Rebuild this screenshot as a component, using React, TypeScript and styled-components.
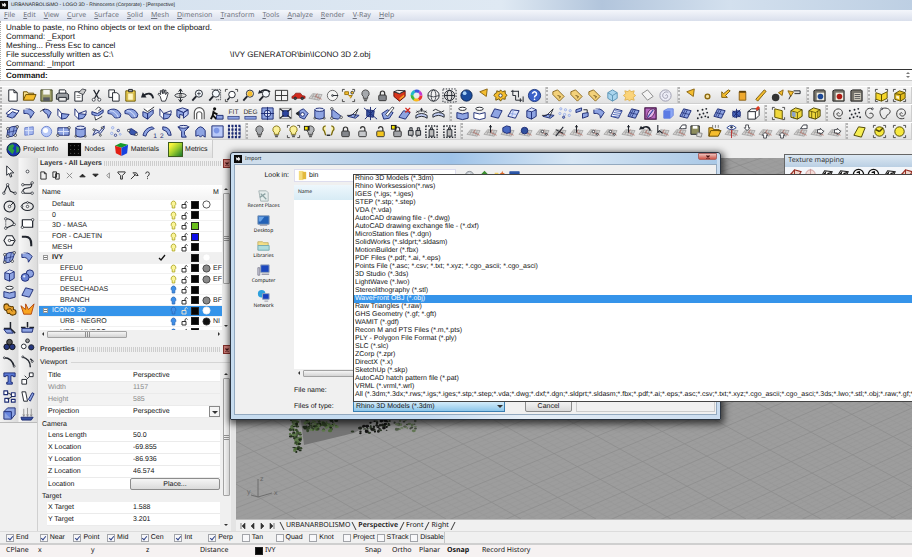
import React from "react";
import styled, { createGlobalStyle } from "styled-components";

const GlobalStyle = createGlobalStyle`
  * { box-sizing: border-box; }
  html, body { margin: 0; padding: 0; }
  body {
    font-family: "Liberation Sans", Arial, sans-serif;
    font-size: 7px;
    color: #111;
    background: #f0f0f0;
    text-rendering: geometricPrecision;
  }
  button, input, select { font: inherit; color: inherit; margin: 0; padding: 0; border: 0; background: none; text-rendering: inherit; }
`;

/* ---------- icon drawings, on a 16 x 16 grid ---------- */

const INK = "#20242c";
const NAVY = "#1d2c74";
const BLUE = "#8ea4e2";
const PALE = "#dfe6fb";
const GOLD = "#f5bd2e";

const s = (d: string, stroke = INK, w = 1, fill = "none") => (
  <path d={d} stroke={stroke} strokeWidth={w} fill={fill} strokeLinejoin="round" />
);
const b = (d: string, fill = BLUE) => s(d, NAVY, 1, fill);
const dot = (x: number, y: number, r = 1.3, fill = "#fff", stroke = INK) => (
  <circle cx={x} cy={y} r={r} fill={fill} stroke={stroke} strokeWidth={0.8} />
);
const bulb = (fill: string, stroke = "#444") => (
  <>
    <path d="M8 2a4 4 0 0 0-2.3 7.2V11h4.6V9.200A4 4 0 0 0 8 2z" fill={fill} stroke={stroke} />
    <path d="M6 12h4M6.500 13.500h3" stroke="#555" strokeWidth="1.300" />
  </>
);
const lock = (fill: string, open = false) => (
  <>
    <path d={open ? "M10.500 8V5a2.300 2.300 0 0 0-4.600 0" : "M5.700 8V5.500a2.300 2.300 0 0 1 4.600 0V8"} stroke="#333" strokeWidth="1.300" fill="none" />
    <rect x="4" y="7.500" width="8" height="6" rx="1" fill={fill} stroke="#333" />
  </>
);
const plane = (
  <>
    <path d="M1 11l4-5 10 1-3 6z" fill="#d4d2d0" stroke="#999" strokeWidth="0.700" />
    <path d="M3.500 8.500l10 1.500M6.500 6.200L4 11.500M9 6.500L7 12M12 6.800L10 12.500" stroke="#999" strokeWidth="0.700" />
    <path d="M8 9l6.500 3M8 9l2-3" stroke="#b3695f" strokeWidth="0.800" />
  </>
);
const lens = (
  <>
    <circle cx="9.500" cy="6" r="3.800" fill="#f4f8fc" stroke={INK} />
    <path d="M6.500 9L2.500 13.500" stroke={INK} strokeWidth="2" />
  </>
);
const tag = (
  <>
    <path d="M2 4l5-2 7 7-5 5-7-7z" fill="#f3d17a" stroke="#8a681e" />
    <path d="M7 8l3 1-1 2" stroke="#6b5118" fill="none" />
  </>
);
const corners = (
  <path d="M1.500 4V1.500H4M12 1.500h2.500V4M14.500 12v2.500H12M4 14.500H1.500V12" stroke="#333" fill="none" strokeWidth="0.900" />
);
const sheet = b("M2 11l4-8 8 2-4 8z");

const glyphs: Record<string, React.ReactNode> = {
  new: s("M4 2h5.500L13 5v9H4zM9.500 2v3H13", INK, 1, "#fff"),
  open: <>{s("M1.500 13V4h4l1 1.500h6V7", "#6a4d00", 1, "#f7df8a")}{s("M1.500 13l2.500-6h11l-2.500 6z", "#6a4d00", 1, GOLD)}</>,
  save: <>{s("M2 2h12v12H2z", "#3d411f", 1, "#a0a06b")}<path d="M4.500 2h7v5h-7z" fill="#f3f3ee" /><path d="M4.500 10h7v4h-7z" fill="#565a60" /></>,
  print: <>{s("M4.500 6V2h6l1 1v3", INK, 1, "#fff")}{s("M1.500 7l2-1.500h9l2 1.500v5h-13z", INK, 1, "#9b9ea3")}{s("M4 10h8v4H4z", INK, 1, "#eee")}</>,
  props: <>{s("M3 4h8v10H3z", INK, 1, "#fff")}{s("M7 5l4-4 4 1-3 5z", INK, 0.8, "#ccc")}{s("M5 8h4M5 10h4", "#888")}</>,
  cut: <>{s("M5 2l5 9M11 2L6 11", INK, 1.3)}{dot(5, 12.5, 1.6)}{dot(11, 12.5, 1.6)}</>,
  copy: <>{s("M3 2h6v8H3z", INK, 1, "#fff")}{s("M7 5h4.500L14 7v7H7z", INK, 1, "#fff")}</>,
  paste: <>{s("M3 3h10v11H3z", "#665400", 1, "#f3d552")}{s("M5 5.500h6V13H5z", "#b49831", 0.6, "#fff6c0")}{s("M6 1.500h4v2.500H6z", INK, 1, "#aaa")}</>,
  undo: <>{s("M14 11C13 5 8 5 4 8", INK, 2)}<path d="M1 10l2-5.500L7 10z" fill={INK} /></>,
  pan: s("M4.500 9L2 6.500 3 5.500l2 1.500-.5-4 1.300-.3L7 6V1.800h1.400V6l1-3.800 1.300.3L10.300 7l1.500-2.500 1.200.7-1.500 5.300L10 14H6z", INK, 0.9, "#fff"),
  rotate: <>{s("M8 1v14M8 1L6 4M8 1l2 3M6 12l2 3 2-3", INK)}<ellipse cx="8" cy="8" rx="6" ry="2.200" fill="none" stroke={INK} /><circle cx="8" cy="8" r="2" fill="#8b8b8b" /></>,
  zoom: <>{lens}{s("M9.500 4v4M7.500 6h4", INK, 0.8)}</>,
  zoomwin: <>{lens}<path d="M5 1.500h9.500v11H9" stroke={INK} fill="none" strokeDasharray="1 1" /></>,
  zoomext: <>{corners}<circle cx="8.500" cy="7" r="3.500" fill="#fff" stroke={INK} />{s("M6 10l-2.500 3", INK, 1.6)}</>,
  zoomsel: <>{lens}<circle cx="9.500" cy="6" r="2.800" fill={GOLD} /></>,
  zoomprev: <>{lens}{s("M3 5c2-3 7-4 11-1", INK, 1.6)}<path d="M1 6l1.500-4L6 5z" fill={INK} /></>,
  four: <>{s("M1.500 2.500h13v11h-13z", "#333", 1, "#f4f4f4")}{s("M8 2.500v11M1.500 8h13", "#333", 1)}</>,
  car: <><path d="M1 9l2-1 2-2.500h5L12 8l3 .8V11H1z" fill="#d42a1e" stroke="#7c120c" strokeWidth="0.700" />{dot(4.5, 11, 1.4, "#444")}{dot(12, 11, 1.4, "#444")}</>,
  plane,
  circle: <><circle cx="8" cy="8" r="5.500" fill="#f5f5f5" stroke="#666" />{dot(8, 8, 1)}{s("M8 8h6", INK)}</>,
  select: <>{corners}{s("M4 4h4v3H4zM8 8h4l-2 3", "#9b7410", 1, GOLD)}{dot(12, 5, 1.5, GOLD)}</>,
  bulbgray: bulb("#a6a9ad"),
  bulbyellow: bulb("#fbf19a", "#857410"),
  bulbsel: <>{corners}{bulb("#fbf19a", "#857410")}</>,
  bulbswap: <>{bulb("#b4b6b9")}<path d="M1 2h6v5H1z" fill="#1c1c1c" /><path d="M2 3h3v3H2z" fill="#f5e400" /></>,
  bulbs: <>{s("M5 2a3 3 0 0 0-1.500 5.500L5 12M11 2a3 3 0 0 1 1.500 5.500L11 12", "#7a6a10", 1.4, "#fbf2a0")}{s("M6 12h4", INK, 1.5)}</>,
  lock: lock("#84878c"),
  unlock: lock("#c6c8cb", true),
  lockyellow: lock("#f3c51e", true),
  lockswap: <>{lock("#a2a4a8")}<path d="M1 1h6v5H1z" fill="#1c1c1c" /><path d="M2 2h3v3H2z" fill="#f5e400" /></>,
  locks: <>{s("M1.500 7h5v5h-5zM9.500 7h5v5h-5zM3 7V4h2.500v3M11 7V4h2.500v3M4 12l2 2M12 12l-2 2", INK, 1, "#bbb")}</>,
  lockdots: <><path d="M1.500 2h13M1.500 14h13M2 2v12M14 2v12" stroke={INK} strokeWidth="1.600" strokeDasharray="1.500 1.500" />{s("M5.500 6h5v7h-5zM7 6V4h2v2", INK, 1, "#bbb")}</>,
  shade: <>{s("M2 4l6 2 6-3v6l-6 5-6-5z", "#6b1008", 1, "#d8361c")}{s("M2 4l4-1.500L14 3 8 6z", INK, 1, "#f6f0ea")}<path d="M8 11l5-4v2l-5 4z" fill="#f4a62a" /></>,
  wheel: <>{["#e33", "#f8b81c", "#3cba3c", "#23b9c9", "#3a56e0", "#c63ad0"].map((c, i) => (
    <circle key={c} cx="8" cy="8" r="4.800" fill="none" stroke={c} strokeWidth="3" strokeDasharray="5.100 40" strokeDashoffset={-i * 5.03} />
  ))}</>,
  globe: <><circle cx="8" cy="8" r="6" fill="#f1f1f1" stroke={INK} /><ellipse cx="8" cy="8" rx="2.500" ry="6" fill="none" stroke={INK} strokeWidth="0.800" />{s("M2 8q6 3 12 0", INK, 0.8)}</>,
  globesel: <><circle cx="8" cy="8" r="5.500" fill="#ddd" stroke={INK} /><ellipse cx="8" cy="8" rx="2.500" ry="5.500" fill="none" stroke={INK} />{s("M2.500 8h11", INK)}<rect x="1" y="1" width="14" height="14" fill="none" stroke={INK} strokeDasharray="1.500 1.500" /></>,
  ball: <><circle cx="8" cy="8" r="6" fill="#1b4d9e" stroke="#0c2450" /><circle cx="6" cy="5.500" r="2" fill="#a9d2f7" /></>,
  pointer: s("M4 4l8-3-1 8z", "#8a6410", 1, GOLD),
  gear: <>{s("M2 6l2-1V3l3 1 1-2 2 2 3-1v2.500L15 8l-2 1.500V12l-3-.5L8 14l-1.500-2.500L3 13v-3L1 8z", "#6f5408", 1, GOLD)}{dot(8, 8, 1.8)}</>,
  dims: s("M3 2v6M1 3.500h8M9 3v7M3 8h3v5h7M11 11v4M14 9v6", INK, 1),
  help: <><circle cx="8" cy="8" r="6.500" fill="#3c62c9" stroke="#1b3680" /><path d="M5.800 6.200a2.200 2.200 0 1 1 3.300 2Q8 9 8 10" stroke="#fff" strokeWidth="1.600" fill="none" /><circle cx="8" cy="12" r="0.900" fill="#fff" /></>,
  tag,
  cube: <>{s("M3 5l5-3 5 3v6l-5 3-5-3z", "#5b93b4", 1, "#a9d5ee")}{s("M3 5l5 3 5-3M8 8v6", "#5b93b4", 1)}</>,
  puff: s("M8 2l1.500 2L13 3l-1 3 2.500 2L12 10l1 3-3.500-1L8 14l-1.500-2L3 13l1-3-2.500-2L4 6 3 3l3.500 1z", "#e0b352", 1, "#fbd47a"),
  rhomb: s("M2 6l6-4 6 7-6 4z", "#8a8a8a", 1, "#f4f4f4"),
  swirl: <><circle cx="8" cy="8" r="6" fill="#ececf6" stroke="#9a9aac" />{s("M8 8c1-2 3 0 2 2s-5 1-5-2 4-5 6-3", "#9a9aac")}</>,
  ring: <><circle cx="8" cy="9" r="2.500" fill="#f6e3a3" stroke="#8d6a10" strokeWidth="1.500" /></>,
  downleft: s("M13 3L8 8l2 2H4V4l2 2 5-4z", "#7a5c0d", 1, GOLD),
  cyl: <>{s("M4.500 4h7v9h-7z", "#8a5e10", 1, "#efa92d")}{s("M4.500 4h7", "#5c3e08", 2)}</>,
  bar: s("M3 12L12 2l2 1.500L5 14z", "#7a5c0d", 1, GOLD),
  bomb: <><circle cx="6" cy="10" r="4" fill="#333" />{s("M9 5l5-3-1 6z", "#8a6410", 1, GOLD)}</>,
  spot: <>{s("M1 3l6 1-3 5z", "#8a6410", 1, GOLD)}{s("M7 3h7v3H8", INK, 1, "#ddd")}{s("M2 12l2-4", INK)}</>,
  render: <>{s("M2 3l2-1h9l1 1v11H2z", "#222", 1, "#76736a")}<path d="M5 5h8v8H5z" fill="#f0ede2" /><circle cx="9" cy="9" r="3" fill="#1c4896" /></>,
  renderred: <>{s("M2 3l2-1h9l1 1v11H2z", "#222", 1, "#76736a")}<path d="M5 5h8v8H5z" fill="#f0ede2" /><circle cx="9" cy="9" r="3" fill="#ae1b14" /></>,
  list: <>{s("M2 3l2-1h9l1 1v11H2z", "#222", 1, "#76736a")}{s("M5 5h8v8H5z", "#444", 0.5, "#e7e2d2")}{s("M6 7h6M6 9h6M6 11h6", INK, 0.8)}</>,
  boxopen: <>{corners}{s("M2 5l6 2v7l-6-2zM8 7l6-3v7l-6 3z", "#5f5100", 1, "#f5d62b")}</>,
  boxgold: <>{corners}{s("M3 6l5-3 6 2v6l-5 3-6-2z", "#5f5100", 1, "#e4bb1f")}{s("M3 6l6 1 5-2M9 7v7", "#5f5100")}<path d="M4.500 8l3 .7v3l-3-.7z" fill="#fdf5c8" /></>,
  sheet,
  sheetlight: <>{b("M2 11l4-7 8 1-4 8z", PALE)}{s("M4 8l8 1M8 4l-2 8", BLUE)}</>,
  surf: <>{s("M1 8l6-5 8 2-5 7z", NAVY, 1, "#fff")}{b("M2 11l6-5 5 2-5 5z")}</>,
  curl: <>{b("M2 4q7-3 11 3l-4 6Q9 7 2 8z")}{s("M2 4l5-1", "#fff", 0.8)}</>,
  curlhalf: <>{b("M4 4q6-2 9 3l-3 6Q10 8 6 7z")}{s("M1 6l5-3", INK, 0.8)}</>,
  fold: <>{b("M2 3l4 5v6l-4-4z", "#fff")}{b("M6 8l8 1-3 4-5 1z")}</>,
  fold2: <>{b("M2 3l4 5 8-3v3l-8 6-4-4z", "#fff")}{b("M6 8l8 1-3 4-5 1z")}</>,
  sweep: <>{b("M2 6l6 2 6-4v3l-6 4-6-2z")}{s("M6 4l3-3 3 2-3 2M5 11l1 4 7-4", INK, 0.9, "#fff")}</>,
  leaf: <>{b("M1 5q7-4 12 1 3 3 1 6-6 2-7-1T1 8z")}{s("M3 5q6 0 9 7", "#dfe6fb")}</>,
  block: <>{b("M2 6l5 2v6l-5-3zM7 8l6-4v4l-6 6z")}{s("M3 3l4 3 7-5", INK, 1, "#fff")}</>,
  boxes: <>{b("M2 4l6-2 6 2-5 3zM9 7l5-3v5l-5 4z", "#b9c6f3")}{b("M2 4l7 3v3L5 9v4L2 11z")}</>,
  arch: <>{s("M2.500 14V7a5 5 0 0 1 10.500 0v7M5 14V8a3 3 0 0 1 5.500 0v6", "#555", 1.2, "#fff")}</>,
  worker: <><circle cx="6" cy="3" r="1.700" fill="#111" />{s("M5 5L4 10l-2 4M5 7l4 2M4 10l4 4", "#111", 2)}{b("M8 10h7v4H8z")}</>,
  fit: <><rect x="2" y="11" width="12" height="3" fill={BLUE} stroke={NAVY} strokeWidth="0.700" /><text x="8" y="8" fontSize="7" textAnchor="middle" fill="#333">FIT</text></>,
  deg: <><rect x="2" y="11" width="12" height="3" fill={BLUE} stroke={NAVY} strokeWidth="0.700" /><text x="8" y="8" fontSize="7" textAnchor="middle" fill="#333">DEG</text></>,
  target: <>{b("M2 2h12v12H2z")}<circle cx="8" cy="8" r="3.500" fill="#dfe6fb" stroke={NAVY} />{s("M8 1v14M1 8h14", NAVY)}</>,
  shrink: <>{s("M1.500 2.500h13v11h-13z", "#777", 0.8, "#e6e6e6")}{b("M5 5h6v6H5z", "#2e469e")}{s("M2 3l4 3M14 3l-4 3M2 13l4-3M14 13l-4-3", INK, 1.2)}</>,
  tangent: <>{b("M5 5l4-2 5 5-4 6-5-2z")}<circle cx="8" cy="9" r="2" fill="#fff" stroke={NAVY} />{s("M1 8l3-2v4z", INK, 1, INK)}</>,
  bluecyl: <>{b("M3 4h10v9q-5 2-10 0z")}<ellipse cx="8" cy="4" rx="5" ry="1.800" fill={PALE} stroke={NAVY} />{dot(3, 13, 1)}{dot(13, 13, 1)}</>,
  tri: <>{b("M3 3l10 8-3 3-7-1z")}{dot(3, 3)}{dot(3, 13)}{dot(13, 12)}</>,
  bird: <>{b("M2 11l5-2 7 1-4 3z")}{s("M1 10h5l7-7-4 9", INK, 0.9)}</>,
  burst: <>{b("M4 4l8 1-1 7-7-1z", "#38539f")}{s("M1 2l14 12M14 2L2 14M8 1v14", NAVY, 1)}</>,
  pencil: <>{b("M2 8l6-4 6 3-4 6-6 1z")}{s("M6 9l7-8 2 1-7 9z", INK, 0.8, "#fff")}</>,
  delsrf: <>{b("M2 12l5-7 7 2-5 7z")}{s("M9 2l5 5M14 2L9 7", "#d3271f", 1.4)}</>,
  comb: <>{s("M2 13q6-4 12 0v-3q-6-4-12 0z", INK, 1, "#c3cff5")}{s("M2 7q6-4 12 0M3 5l2 2M8 2v4M6.500 3.500h3M13 5l-2 2", INK, 0.9)}</>,
  comb2: <>{s("M2 12q6-4 12 0v-3q-6-4-12 0z", INK, 1, "#c3cff5")}{s("M2 5q3-3 6 0t6 0", INK)}</>,
  tube: <><ellipse cx="8" cy="3" rx="4" ry="1.700" fill="#fff" stroke={INK} />{b("M2 7q6 3 12 0v6q-6 3-12 0z")}</>,
  tubelight: <><ellipse cx="8" cy="3" rx="4" ry="1.700" fill="#fff" stroke={INK} />{b("M2 7q6 3 12 0v6q-6 3-12 0z", "#fff")}</>,
  bluecube: <>{b("M3 5l5-3 5 2v7l-5 3-5-2z")}{b("M3 5l5 1 5-2M8 6v8", "none")}<path d="M4 4.500L8 2.500l4 1.500-4 1.500z" fill={PALE} /></>,
  pts: <>{[3, 8, 13].map((x, i) => <React.Fragment key={x}>{dot(x, 3 + i, 1.2, PALE, BLUE)}{dot(x - 1, 8 + i, 1.2, PALE, BLUE)}</React.Fragment>)}{dot(6, 12, 1.2, BLUE, NAVY)}</>,
  two: <>{b("M1 4l6-2v3L1 7zM8 8l6-1v4l-6 2z")}{s("M9 4h4v3", INK)}</>,
  stripe: <>{b("M2 11l4-8 8 2-4 8z", "#fff")}{s("M4 9l8 1M5 7l8 1M6 5l8 1M3 11l8 1", "#4a63b8", 1)}</>,
  gridsrf: <>{b("M2 11l4-8 8 2-4 8z")}{s("M4 7l8 2M10 4l-4 8M8 3.500L4 11", NAVY, 0.8)}</>,
  purple: <>{s("M2 2h12v12H2z", "#451548", 1.3, "#b667be")}{s("M4 12q1-9 7-9l2 1q-1 8-7 9z", "#451548", 0.8, "#e2b5e6")}{s("M5 12L11 4", "#2a43a0", 1.2)}</>,
  softcube: <>{s("M3 5l4-2h6v7l-3 3H3z", "#6a84dc", 1, "#8ea9f5")}<path d="M3 5h7v8H3z" fill="#5b7be4" /></>,
  spray: <>{[[3, 5], [5, 9], [8, 4], [9, 8], [12, 3], [13, 7], [7, 12], [11, 11], [3, 13], [14, 12]].map(([x, y]) => <circle key={x * 20 + y} cx={x} cy={y} r="1" fill={INK} />)}</>,
  wirebox: <>{s("M2 6l4-3h8v7l-4 4H2zM2 6h8v8M10 6l4-3", INK, 1, "#fff")}{s("M11 4l3-3", "#db3b23", 3)}</>,
  star: <>{b("M4 6l6-1 2 1v5l-6 1-2-1z", "#4763b9")}{s("M8 3v10M4 5l8 7M12 4l-8 8", NAVY)}</>,
  yplane: <>{corners}{s("M4 3l8 2v9l-8-2z", "#5d5000", 1, "#f0d83c")}</>,
  ycube: <>{s("M2 5l5-3 7 2v7l-5 3-7-2z", "#4a4200", 1, "#f0d83c")}{s("M2 5l7 2 5-3M9 7v7M5 6v7", "#4a4200", 0.8)}<path d="M3 6l4 1v5l-4-1z" fill="#8ba3ce" /></>,
  ycube2: <>{s("M2 5l5-3 7 2v7l-5 3-7-2z", "#4a4200", 1, "#f0d83c")}{s("M2 5l7 2 5-3M9 7v7M5 6v7M11.500 5v7", "#4a4200", 0.8)}</>,
  spiral: s("M9 8c-1-2-4 0-2 2s6 0 5-4-8-4-9 1 3 8 8 6", "#333", 1),
  crv: <>{s("M11 3c-5-2-8 2-7 6s7 6 8 1c0-2-2-3-4-2", "#333", 1)}{dot(11, 3, 1)}</>,
  blob: <>{s("M4 3c4-2 9 0 9 3S9 9 9 11s-3 4-5 1S1 5 4 3z", "#333", 1)}{dot(4, 3, 1)}</>,
  patch: <>{b("M3 5l4-2 7-1-3 9-3 2-6 1z")}{s("M5 4l-1 9M10 3L8 12M3 9l9-2", NAVY, 0.7)}{dot(3, 5)}{dot(13, 3)}{dot(11, 12)}{dot(3, 13)}</>,
  patchlight: <>{s("M3 4l9-1v8l-9 1z", "#6c82cc", 1, "#a6b8ef")}{s("M3 7h9M7 3v9", "#dfe6fb")}</>,
  ballight: <><circle cx="8" cy="8" r="5.500" fill="#b8c9f7" stroke="#6f86cf" /><circle cx="7" cy="7" r="2.700" fill="#fff" /></>,
  rect: <>{b("M2 4h12v8H2z")}{s("M2 8h12M8 4v8", PALE)}{dot(2, 12)}{dot(14, 4)}</>,
  bags: <>{b("M2 12l3-6 4 2 5-6v3l-4 5-3-1z", PALE)}{dot(3, 6, 1)}{dot(12, 4, 1)}{dot(10, 12, 1)}</>,
  dots3: <>{dot(5, 4, 1.3, PALE, BLUE)}{dot(11, 7, 1.3, PALE, NAVY)}{dot(4, 10, 1.3, PALE, BLUE)}{dot(8, 12, 1.3, PALE, NAVY)}{dot(13, 11, 1, PALE, BLUE)}</>,
  bone: <>{b("M3 6l4-1 6 4-2 3-5-1z", "#3a57ae")}{dot(4, 7)}{dot(12, 11)}</>,
  arc1: <>{b("M1 12Q3 4 11 3l2 2Q6 6 4 13z")}<text x="12" y="15" fontSize="7" fill={NAVY}>1</text></>,
  arc2: <>{b("M4 3q8 0 9 9h-3Q9 7 4 6z")}<text x="1" y="15" fontSize="7" fill={NAVY}>2</text></>,
  funnel: <>{b("M2 3h12L9 8v3l2 3H6V8z")}<ellipse cx="8" cy="3" rx="5" ry="1.500" fill={PALE} stroke={NAVY} /></>,
  cloth: b("M3 13V7q5-8 10 0v7l-3-2-2 2-2-2z"),
  photo: <>{b("M2 2h12v12H2z", "#b9c9f8")}<circle cx="7" cy="7" r="3" fill="#7d97e6" /></>,
  matrix: <>{[2, 6, 10, 14].map((y) => <path key={y} d={`M1 ${y}h14`} stroke={NAVY} strokeWidth="2.200" strokeDasharray="2.200 1.500" />)}{s("M2 2v12M6 2v12M10 2v12M14 2v12", NAVY, 0.7)}</>,
  planeup: <>{plane}{s("M8 9V1M6.500 3h3", INK, 1.1)}</>,
  planebox: <>{plane}{b("M3 4l4-2 4 1v6l-4 1-4-2z", "#4969c2")}</>,
  planeball: <>{plane}<circle cx="7" cy="7" r="3.500" fill="#30509f" stroke={NAVY} /></>,
  planept: <>{plane}{dot(8, 8, 1.3)}{dot(12, 11, 1)}</>,
  planex: <>{plane}{s("M4 13L12 3M4 6l8 4", INK, 1.1)}</>,
  planeundo: <>{plane}{s("M13 7C12 2 7 2 4 5", INK, 1.8)}<path d="M1 6l2-4 4 3z" fill={INK} /></>,
  planecur: <>{plane}{s("M3 1v8l2-2 3 3", INK, 1.2, "#fff")}</>,
  planedoc: <>{plane}{s("M8 5l3-4h4v4h-4z", INK, 0.9, "#fff")}</>,
  planesave: <><path d="M2 2h9v9H2z" fill="#8d8d5e" stroke={INK} /><path d="M4 2h5v3H4z" fill="#fff" />{s("M9 9l5 1-1 4-5-1z", "#888", 1, "#ddd")}</>,
  planeopen: <>{s("M2 13V4h4l1 2h6v2M2 13l2-6h11l-3 6z", "#6a4d00", 1, GOLD)}{s("M6 4V1M9 4V1M12 4V1", "#777")}</>,
  planeeye: <>{plane}{s("M3 4q5-5 10 0-5 4-10 0z", "#26418f", 1, "#fff")}{dot(8, 3.5, 1, "#26418f")}{s("M8 6v9", "#b33")}</>,
  planearr: <>{plane}{s("M5 1h3v3h1.500L6.500 7 3.500 4H5z", INK, 0.8, "#fff")}</>,
  planearr2: <>{plane}{s("M6 15h3v-3h1.500l-3-3-3 3H6z", INK, 0.8, "#fff")}</>,
  planeright: <>{plane}{s("M8 6h3V4.500L14.500 8 11 11V9.500H8z", INK, 0.8, "#fff")}</>,
  yrhomb: s("M2 12l5-9 7 1-4 10z", "#4a4200", 1, "#f6ee52"),
  yball: <>{corners}<circle cx="8" cy="8" r="5" fill="#f6e83e" stroke="#4a4200" /></>,
  yballcut: <>{corners}<circle cx="8" cy="8" r="5" fill="#f6e83e" stroke="#4a4200" />{s("M8 8l4-4M8 8L4 6", "#4a4200", 1.5)}</>,
  arrow: s("M5 2v10l2.500-2 1.500 4 1.500-.7L9 9.500h3.500z", INK, 1, "#fff"),
  point: dot(8, 8, 1.5),
  polyline: <>{s("M2 13L6 4l3 7 5 2", INK, 1.1)}{dot(6, 4)}{dot(2, 13)}{dot(14, 13)}</>,
  curve: <>{s("M3 4h8M11 3q3 1 0 4L5 8q-4 3 0 5h8", INK, 1.1)}{dot(3, 4)}{dot(13, 2)}{dot(3, 12)}{dot(13, 13)}</>,
  circ2: <><circle cx="8" cy="8" r="5.800" fill="none" stroke={INK} strokeWidth="1.200" />{dot(8, 8)}{s("M9 7l4-4", INK)}</>,
  ellipse: <><ellipse cx="8" cy="8" rx="6.200" ry="4.300" fill="none" stroke={INK} strokeWidth="1.200" />{dot(8, 8)}{dot(8, 3.7, 1)}{dot(2, 8, 1)}</>,
  arc: <>{s("M4 13l9-4M4 3q7 0 9 6", INK, 1.1)}<path d="M4 3v10" stroke={INK} strokeDasharray="1 1" />{dot(4, 3)}{dot(4, 13)}{dot(13, 9)}</>,
  rectangle: <>{s("M2.500 4h11v8h-11z", INK, 1.3, "#fff")}{dot(2.5, 12)}{dot(13.5, 4)}</>,
  polygon: <>{s("M5 3h6l3 5-3 5H5L2 8z", INK, 1.1, "#f6f6f6")}{dot(8, 8)}{s("M9 8h4", INK)}</>,
  fillet: s("M2 4h4q6 0 6 8v2", INK, 2.2),
  boolean: <><circle cx="10.500" cy="6" r="4" fill={BLUE} stroke={NAVY} /><circle cx="5.500" cy="10" r="4.200" fill="#6982d3" stroke={NAVY} /><circle cx="4.500" cy="9" r="1.200" fill={PALE} /></>,
  puzzle: <>{s("M2 5q0-3 3-3 2 0 2 2l3 1q3-1 2 3 3 0 3 3t-4 3q-2 0-3-2-3 1-3-3-3 0-3-4z", "#5a3900", 1.1, "#eaa32d")}{s("M5 8l4-1 2 3", "#5a3900", 1)}</>,
  explode: s("M1 4l5 4 0-6 3 6 6-6-3 11H4z", "#b3480e", 1, "#f8a522"),
  trim: <>{s("M2 9h7M9 2v7l5 5", INK, 1.6)}{b("M2 10h7l3 4H5z")}</>,
  split: <>{s("M1 8h5M10 8h5M8 2v6", INK, 1.6)}{b("M2 9h12l-1 4H2z")}</>,
  group: <><circle cx="8" cy="5.500" r="3" fill="#555" stroke="#111" /><circle cx="5" cy="10.500" r="3" fill="#26377e" stroke="#111" /><circle cx="11" cy="10.500" r="3" fill="#26377e" stroke="#111" /></>,
  ungroup: <><circle cx="8" cy="4" r="2" fill="#999" stroke={INK} /><circle cx="4" cy="10" r="2.500" fill="#fff" stroke={INK} /><circle cx="12" cy="11" r="2.800" fill="#26377e" stroke={INK} /></>,
  bend: <>{s("M2 4q9 0 11 10", INK, 1.6)}{dot(2.5, 4, 1)}{dot(13, 13, 1)}</>,
  bend2: <>{s("M2 3q9 2 9 11M11 5l3 3", INK, 1.5)}{dot(3, 3, 1)}{dot(13, 8, 1)}</>,
  text: b("M2 2h12v4h-2V5H9.500v7H11v2H5v-2h1.500V5H4v1H2z", "#5a79d6"),
  move: <>{s("M2 9h5v5H2zM10 2h4v4h-4z", INK, 1, "#fff")}{s("M7 9l3-3M5 5l2 2", INK, 1)}</>,
  array: <>{s("M2 2h4v4H2zM10 4h4v4h-4zM3 10h4v4H3zM10 11h4v3h-4z", NAVY, 1.2, "#fff")}{s("M6 4l4 2M6 11l5-3", INK)}</>,
  mirror: <>{s("M2 3h4l2 10H4z", INK, 1, "#fff")}{b("M9 11l4-7 2 1-4 8z")}</>,
  solid: <>{b("M2 6l4-4h8v7l-4 5H2z")}{b("M2 6h8v8", "#6583dd")}</>,
  ground: <>{s("M4 3v8M8 2v9M12 3v8M3 9l1 2 1-2M7 9l1 2 1-2M11 9l1 2 1-2", "#888", 0.9)}{b("M1 12h13l-2 3H2z", "#35519e")}</>,
  earth: <><circle cx="8" cy="8" r="7" fill="#1734b5" stroke="#102040" /><path d="M3 4l4-2 2 2-2 3 2 2-2 4-3-3-2-2zM11 4l3 2v4l-3 2z" fill="#2c9d40" /></>,
  nodes: <><rect x="1" y="1" width="14" height="14" fill="#080808" />{[4, 8, 12].map((y) => [4, 8, 12].map((x) => <circle key={`${x}-${y}`} cx={x} cy={y} r="0.500" fill="#999" />))}</>,
  rgb: <><path d="M1 4l6-3 8 2-7 3z" fill="#169a2a" /><path d="M1 4l7 2v9l-6-3z" fill="#e22015" /><path d="M8 6l7-3-1 9-6 3z" fill="#1742e0" /></>,
  tex: <><path d="M3 9l3-5 8 1-3 7-7 1z" fill="#fff" stroke="#222" strokeWidth="1.200" /><path d="M3 9l4-1 1-4z" fill="#111" /><path d="M9 7l4-1" stroke="#111" strokeWidth="1.500" /></>,
  texred: <><path d="M2 10l6-7 7 2-4 7z" fill="#f0d5cb" stroke="#94281d" strokeWidth="1.200" />{s("M4 7l8 3M8 3v8", "#94281d")}</>,
  texpale: <><circle cx="8" cy="8" r="5" fill="#f3dcd7" stroke="#c99" />{s("M8 2v12", "#c99")}</>,
  texball: <><circle cx="8" cy="8" r="5.500" fill="#fff" stroke="#111" strokeWidth="1.400" />{s("M6 6l3-1v5M4 11h8", "#111", 1.3)}</>,
};

const Svg = styled.svg<{ $size: number }>`
  display: block;
  flex: none;
  width: ${(p) => p.$size}px;
  height: ${(p) => p.$size}px;
`;

const Icon = ({ name, size = 15 }: { name: string; size?: number }) => (
  <Svg $size={size} viewBox="0 0 16 16" fill="none" aria-hidden="true">
    {glyphs[name]}
  </Svg>
);

/* ---------- frame ---------- */

const Frame = styled.div`
  position: relative;
  min-height: 100vh;
  display: flex;
  flex-direction: column;
  overflow: hidden;
  background: #f0f0f0;
`;

const TitleBar = styled.header`
  display: flex;
  align-items: center;
  gap: 3px;
  height: 10px;
  font-size: 5px;
  color: #222;
  background: linear-gradient(90deg, #d3e0ee, #dfe9f3 55%, #b2c5dc 66%, #d3e0ee 80%, #bdcfe3);
`;

const AppBadge = styled.span`
  display: grid;
  place-items: center;
  width: 8px;
  height: 8px;
  background: #0a0a0a;
`;

const Rhino = () => (
  <AppBadge>
    <Svg $size={6} viewBox="0 0 8 8" aria-hidden="true">
      <path d="M1 1l2 2 2-2 2 3-2 3-1-2-2 1z" fill="#eee" />
    </Svg>
  </AppBadge>
);

const MenuBar = styled.nav`
  display: flex;
  align-items: center;
  gap: 8px;
  height: 11px;
  padding-left: 4px;
  font: 7px/10px "Noto Sans", sans-serif;
  color: #6f7480;
  background: linear-gradient(#f4f6fb, #d9dfec);
`;

const MenuItem = styled.button`
  white-space: nowrap;
  &::first-letter { text-decoration: underline; }
`;

const CommandArea = styled.section`
  height: 60px;
  padding-left: 5px;
  font-size: 8px;
  line-height: 9px;
  background: #fff;
  border-left: 1px dotted #aaa;
  border-bottom: 1px solid #c9c9c9;
`;

const History = styled.div`
  display: flex;
  flex-direction: column;
  height: 49px;
  padding-top: 2px;
  border-bottom: 1px solid #333;
`;

const HistoryLine = styled.div`
  display: flex;
  white-space: pre;
`;

const PathStart = styled.span`
  width: 224px;
`;

const Prompt = styled.label`
  display: flex;
  align-items: center;
  height: 10px;
  font-weight: bold;
`;

const PromptInput = styled.input`
  flex: 1;
  outline: none;
`;

/* ---------- toolbars ---------- */

const ToolbarStack = styled.section`
  padding-top: 5px;
  background: #efefef;
`;

const ToolbarRow = styled.div`
  display: flex;
  height: 18px;
  border-top: 1px solid #fff;
  border-bottom: 1px solid #cfcfcf;
  background: linear-gradient(#f6f6f6, #e1e1e1);
`;

const ToolGroup = styled.div<{ $span: number }>`
  display: flex;
  flex: ${(p) => p.$span} 1 0;
  min-width: 0;
  padding: 0 2px;
  border-left: 2px dotted #b4b4b4;
  border-right: 1px solid #cdcdcd;
`;

const ToolButton = styled.button`
  display: flex;
  flex: 1 1 0;
  min-width: 0;
  align-items: center;
  justify-content: center;
`;

type Group = [number, string];

const toolbarRows: Group[][] = [
  [
    [560, "new open save print props cut copy paste undo pan rotate zoom zoomwin zoomext zoomsel zoomprev four car plane circle select bulbgray lock shade wheel globe globesel ball pointer gear dims help"],
    [130, "tag tag tag cube puff rhomb swirl"],
    [127, "pointer ring downleft cyl bar bomb spot"],
    [57, "render renderred list"],
    [38, "boxopen boxgold"],
  ],
  [
    [457, "surf curl curlhalf fold fold2 sweep leaf leaf block fold2 boxes arch worker fit deg target shrink tangent bluecyl tri bird burst pencil delsrf comb comb2"],
    [318, "tube tubelight sheet sheetlight bluecube bird pts two curl stripe gridsrf purple softcube gridsrf spray gridsrf star wirebox"],
    [56, "yplane ycube ycube2"],
    [81, "spiral spray crv blob spiral"],
  ],
  [
    [247, "patch patchlight ballight rect bluecyl bags dots3 bone arc1 arc2 funnel cloth photo matrix"],
    [214, "bulbgray bulbyellow bulbsel bulbswap bulbs lock unlock lockyellow lockswap locks lockdots lockdots"],
    [390, "plane planeup planebox planeball planept planex planeup planept planept planeup planeundo planecur planedoc planesave planeopen planeeye planearr planearr2 planearr2 planedoc planeright planeright"],
    [61, "yrhomb yballcut yball"],
  ],
];

const PluginRow = styled.div`
  display: flex;
  height: 18px;
`;

const PluginBar = styled.div`
  display: flex;
  align-items: center;
  gap: 9px;
  padding: 0 4px;
  border-left: 2px dotted #b4b4b4;
  border-right: 1px solid #cdcdcd;
  background: linear-gradient(#f6f6f6, #e1e1e1);
`;

const PluginButton = styled.button`
  display: flex;
  align-items: center;
  gap: 2px;
  font-size: 7px;
`;

const Metric = styled.span`
  width: 15px;
  height: 15px;
  border: 1px solid #3c5c1e;
  background: linear-gradient(135deg, #f7f43c 15%, #9fce2e 50%, #1a7a2b);
`;

/* ---------- work area ---------- */

const WorkArea = styled.main`
  display: grid;
  grid-template-columns: 37px 194px minmax(0, 1fr);
  flex: 1;
  min-height: 0;
`;

const Palette = styled.aside`
  display: grid;
  grid-template-columns: 1fr 1fr;
  grid-auto-rows: 1fr;
  align-self: start;
  height: 265px;
  padding-top: 5px;
  background: linear-gradient(90deg, #f2f2f2, #dcdcdc 48%, #f6f6f6 52%, #dcdcdc);
  border-bottom: 1px solid #bbb;
`;

const paletteTools =
  "arrow point polyline curve circ2 ellipse arc rectangle polygon fillet patch curl bluecube boolean tube sheet puzzle explode trim split group ungroup bend bend2 text move array mirror solid ground";

const Panels = styled.div`
  display: flex;
  flex-direction: column;
  min-width: 0;
  border-left: 1px solid #d0d0d0;
`;

const PanelTitle = styled.h2`
  display: flex;
  align-items: center;
  gap: 2px;
  height: 11px;
  margin: 0;
  padding-left: 2px;
  font-size: 7px;
  font-weight: 600;
  color: #333;
`;

const Grip = styled.span`
  flex: 1;
  height: 5px;
  background: repeating-linear-gradient(90deg, #cdcdcd 0 1px, transparent 1px 2px);
`;

const RedClose = styled.button`
  display: grid;
  place-items: center;
  width: 8px;
  height: 9px;
  border: 1px solid #86302b;
  background: #cf7d77;
`;

const Cross = () => (
  <Svg $size={6} viewBox="0 0 6 6" aria-hidden="true">
    <path d="M1.500 1.500l3 3m0-3l-3 3" stroke="#411" strokeWidth="1.200" />
  </Svg>
);

const LayerTools = styled.div`
  display: flex;
  gap: 2px;
  height: 16px;
`;

const LayerToolButton = styled.button`
  display: grid;
  place-items: center;
  width: 11px;
  height: 12px;
`;

const layerTools: [string, string][] = [
  ["New layer", "M2 1h4l2 2v6H2zM6 1v2h2"],
  ["New sublayer", "M1 1h4v6H1zM4 3h4v6H4z"],
  ["Delete", "M2 2l6 6M8 2L2 8"],
  ["Move up", "M2 6.500l3-3 3 3z"],
  ["Move down", "M2 3.500h6l-3 3z"],
  ["Back", "M6 2v6L3 5z"],
  ["Filter", "M1 1h8v1L6 5v4H4V5L1 2z"],
  ["Tools", "M1 9l5-5M3 2h4l2 3-2 0-3-2"],
  ["Help", "M3 3q0-2 2-2t2 2-2 3v1M5 8v1"],
];

const ScrollPane = styled.div<{ $height: number }>`
  display: grid;
  grid-template-columns: minmax(0, 1fr) 8px;
  height: ${(p) => p.$height}px;
  padding-right: 1px;
  margin-left: 1px;
`;

const Clip = styled.div`
  overflow: hidden;
  background: #fff;
`;

const Track = styled.div`
  display: flex;
  flex-direction: column;
  align-items: center;
  justify-content: space-between;
  background: #f0f0f0;
`;

const Thumb = styled.div<{ $grow: number }>`
  display: grid;
  place-items: center;
  flex: ${(p) => p.$grow} 1 0;
  width: 7px;
  border: 1px solid #a3a3a3;
  border-radius: 1px;
  background: linear-gradient(90deg, #f5f5f5, #d4d4d4);
`;

const Rest = styled.div<{ $grow: number }>`
  flex: ${(p) => p.$grow} 1 0;
`;

const Tip = ({ d }: { d: string }) => (
  <Svg $size={8} viewBox="0 0 8 8" aria-hidden="true">
    <path d={d} fill="#333" />
  </Svg>
);

const Ridges = ({ across }: { across?: boolean }) => (
  <Svg $size={5} viewBox="0 0 5 5" aria-hidden="true">
    <path d={across ? "M0.500 0v5M2.500 0v5M4.500 0v5" : "M0 0.500h5M0 2.500h5M0 4.500h5"} stroke="#777" strokeWidth="0.800" />
  </Svg>
);

const UP = "M2 5l2-2 2 2z";
const DOWN = "M2 3h4L4 5z";
const LEFT = "M5 2v4L3 4z";
const RIGHT = "M3 2v4l2-2z";
const DROP = "M1 3h6L4 6z";

const VScroll = ({ thumb, rest }: { thumb: number; rest: number }) => (
  <Track>
    <Tip d={UP} />
    <Thumb $grow={thumb}><Ridges /></Thumb>
    <Rest $grow={rest} />
    <Tip d={DOWN} />
  </Track>
);

const HTrack = styled.div`
  display: flex;
  align-items: center;
  height: 8px;
  margin: 0 8px 0 1px;
  background: #f0f0f0;
`;

const HThumb = styled.div<{ $width: number }>`
  display: grid;
  place-items: center;
  width: ${(p) => p.$width}px;
  height: 7px;
  margin-right: auto;
  border: 1px solid #a3a3a3;
  border-radius: 1px;
  background: linear-gradient(#f5f5f5, #d4d4d4);
`;

const LayerTable = styled.table`
  width: 100%;
  height: 153px;
  table-layout: fixed;
  border-collapse: collapse;
  line-height: 9px;
  td, th { padding: 0; white-space: nowrap; overflow: hidden; }
`;

const LayerHead = styled.tr`
  height: 15px;
  text-align: left;
  background: linear-gradient(#fff, #f3f3f3);
  th { font-weight: normal; }
  th:first-child { padding-left: 3px; }
`;

const LayerRow = styled.tr<{ $state?: string }>`
  color: ${(p) => (p.$state === "selected" ? "#fff" : "#222")};
  background: ${(p) => (p.$state === "selected" ? "#3594ea" : p.$state === "current" ? "#f0f0f0" : "#fff")};
  font-weight: ${(p) => (p.$state === "current" ? "bold" : "normal")};
  border-bottom: 1px solid #f1f1f1;
`;

const Col = styled.col<{ $width?: number }>`
  width: ${(p) => (p.$width ? `${p.$width}px` : "auto")};
`;

const LayerName = styled.td<{ $depth: number }>`
  && { padding-left: ${(p) => (p.$depth === 2 ? 21 : 13)}px; }
`;

const NameLine = styled.span<{ $node?: boolean }>`
  display: flex;
  align-items: center;
  gap: 4px;
  margin-left: ${(p) => (p.$node ? "-9px" : "0")};
`;

const Expander = styled.button`
  width: 5px;
  height: 5px;
  border: 1px solid #999;
  background: linear-gradient(#777, #777) center / 3px 1px no-repeat #fff;
`;

const Swatch = styled.span<{ $color: string }>`
  display: block;
  width: 8px;
  height: 8px;
  border: 1px solid #222;
  background: ${(p) => p.$color};
`;

interface Layer {
  name: string;
  depth?: number;
  node?: boolean;
  state?: string;
  bulb?: string;
  color?: string;
  mat?: string;
  text?: string;
}

const ON = "#fbf59a";
const OFF = "#3f8fe8";
const layers: Layer[] = [
  { name: "Default", bulb: ON, mat: "#fff" },
  { name: "0", bulb: ON },
  { name: "3D - MASA", bulb: ON, color: "#6abf1c" },
  { name: "FOR - CAJETIN", bulb: ON, color: "#0b0be8" },
  { name: "MESH", bulb: ON },
  { name: "IVY", node: true, state: "current" },
  { name: "EFEU0", depth: 2, bulb: ON, mat: "#8a8a8a", text: "EF" },
  { name: "EFEU1", depth: 2, bulb: ON, mat: "#8a8a8a", text: "EF" },
  { name: "DESECHADAS", depth: 2, bulb: OFF },
  { name: "BRANCH", depth: 2, bulb: OFF, mat: "#8a8a8a", text: "BF" },
  { name: "ICONO 3D", node: true, state: "selected", bulb: OFF, mat: "#fff" },
  { name: "URB - NEGRO", depth: 2, bulb: OFF, mat: "#111", text: "NI" },
  { name: "URB - HUECO", depth: 2, bulb: OFF },
];

const Properties = styled.form`
  display: grid;
  grid-auto-rows: 12px;
  align-content: start;
  padding: 0 2px 0 8px;
  background: #f0f0f0;
  height: 100%;
`;

const Section = styled.h3`
  margin: 0 0 0 -5px;
  font-size: 7px;
  line-height: 13px;
  font-weight: normal;
`;

const ViewportLegend = styled(Section)`
  display: flex;
  align-items: center;
  gap: 4px;
  margin-left: 2px;
  height: 15px;
  &::after { content: ""; flex: 1; border-top: 1px solid #d5d5d5; }
`;

const Field = styled.label<{ $dim?: boolean }>`
  display: grid;
  grid-template-columns: 82px minmax(0, 1fr);
  align-items: center;
  padding-left: 1px;
  border-bottom: 1px solid #ebebeb;
  color: ${(p) => (p.$dim ? "#888" : "#111")};
  background: ${(p) => (p.$dim ? "#f3f3f3" : "#fff")};
  input, select { width: 100%; height: 11px; padding-left: 3px; }
`;

const Projection = styled.span`
  display: flex;
  align-items: center;
  select { appearance: none; flex: 1; min-width: 0; }
`;

const DropMark = styled.span`
  display: grid;
  place-items: center;
  width: 11px;
  height: 11px;
  border: 1px solid #888;
  background: #f4f4f4;
`;

const PushButton = styled.button`
  height: 12px;
  border: 1px solid #8c8c8c;
  border-radius: 2px;
  background: linear-gradient(#f5f5f5, #dadada);
  text-align: center;
`;

const ViewColumn = styled.section`
  display: flex;
  flex-direction: column;
  min-width: 0;
  border-left: 5px solid #e4e4e4;
`;

const Scene = styled.svg`
  display: block;
  flex: 1;
  width: 100%;
  min-height: 0;
  height: 361px;
  background: #9c9c9c;
`;

const TabBar = styled.nav`
  display: flex;
  align-items: center;
  height: 12px;
  padding-left: 2px;
  border-top: 1px solid #bbb;
  font: 7px/10px "Noto Sans", sans-serif;
`;

const TabArrow = styled.button`
  width: 10px;
  height: 10px;
`;

const Tab = styled.button<{ $active?: boolean }>`
  font-weight: ${(p) => (p.$active ? 600 : 400)};
  white-space: nowrap;
`;

const Slash = ({ back }: { back?: boolean }) => (
  <Svg $size={8} viewBox="0 0 8 8" aria-hidden="true">
    <path d={back ? "M2 0l4 8" : "M6 0L2 8"} stroke="#222" strokeWidth="0.900" />
  </Svg>
);

const SnapBar = styled.fieldset`
  display: grid;
  grid-template-columns: repeat(13, 1fr);
  align-items: center;
  max-width: 445px;
  height: 11px;
  margin: 0;
  padding: 0 0 0 6px;
  border: 0;
  border-right: 1px solid #c4c4c4;
`;

const Snap = styled.label`
  display: flex;
  align-items: center;
  gap: 2px;
  white-space: nowrap;
`;

const Check = styled.input.attrs({ type: "checkbox" })`
  appearance: none;
  display: grid;
  place-items: center;
  flex: none;
  width: 8px;
  height: 8px;
  border: 1px solid #a2a4a9;
  background: #f8f8fa;
  &:checked::after {
    content: "";
    width: 2px;
    height: 4px;
    border: solid #32468a;
    border-width: 0 1px 1px 0;
    transform: rotate(40deg);
  }
`;

const SnapStrip = styled.div`
  border-bottom: 2px solid #cfcfcf;
  border-top: 1px solid #dcdcdc;
`;

const StatusBar = styled.footer`
  display: grid;
  grid-template-columns: 32px 53px 55px 54px 55px 110px 27px 27px 28px 35px 56px 1fr;
  align-items: center;
  height: 12px;
  padding-left: 6px;
  font: 7px/10px "Noto Sans", sans-serif;
  background: #f6f2f2;
  white-space: nowrap;
`;

const StatusCell = styled.span<{ $strong?: boolean }>`
  display: flex;
  align-items: center;
  gap: 2px;
  font-weight: ${(p) => (p.$strong ? "bold" : "normal")};
`;

/* ---------- floating windows ---------- */

const TextureWindow = styled.aside`
  position: absolute;
  top: 154px;
  left: 86%;
  right: -4px;
  height: 40px;
  border: 1px solid #666;
  background: #f3f6fa;
`;

const TextureTitle = styled.h2`
  height: 12px;
  margin: 0;
  padding-left: 3px;
  font: 7px/11px "Noto Sans", sans-serif;
  color: #333;
  background: linear-gradient(#dce8f3, #bacfe3);
`;

const TextureTools = styled.div`
  display: flex;
  justify-content: space-between;
  padding: 0 2px;
`;

const Dialog = styled.section`
  position: absolute;
  top: 152px;
  left: 230px;
  width: 491px;
  border: 1px solid #2b3440;
  border-radius: 3px 3px 1px 1px;
  padding: 0 3px 4px;
  background: linear-gradient(90deg, #c7dcef, #c3dbf2 40%, #e6eef6 60%, #cadcef);
  box-shadow: 1px 2px 7px 2px rgba(0, 0, 0, 0.65);
`;

const DialogTitle = styled.header`
  display: flex;
  align-items: center;
  gap: 3px;
  height: 11px;
  font: 5px/10px "Noto Sans", sans-serif;
  background: linear-gradient(90deg, #cfdeec 10%, #9fc3e8 45%, #d7e6f4 70%, #a9c8e6);
  h2 { flex: 1; margin: 0; font: inherit; }
`;

const DialogClose = styled.button`
  display: grid;
  place-items: center;
  align-self: start;
  width: 19px;
  height: 7px;
  border: 1px solid #a66;
  border-radius: 0 0 2px 2px;
  background: linear-gradient(#ecc0ba, #cf5548);
`;

const DialogBody = styled.div`
  display: grid;
  grid-template-columns: 59px minmax(0, 1fr);
  border: 1px solid #93a9bf;
  background: #f0f0f0;
`;

const Places = styled.nav`
  display: flex;
  flex-direction: column;
  gap: 1px;
  padding: 23px 2px 0 0;
`;

const Place = styled.button`
  display: flex;
  flex-direction: column;
  align-items: center;
  height: 24px;
  font: 5px/7px "Noto Sans", sans-serif;
`;

const placeIcons: [string, React.ReactNode][] = [
  ["Recent Places", <>{s("M3 3h8l2 2v9H5z", "#a8b4b5", 1, "#e4eceb")}{s("M5 6l6 6M4 10l6-4", "#8ba2a3", 1.3)}</>],
  ["Desktop", <>{s("M2 3h12v9H2z", "#7e98b6", 1, "#2362b7")}<path d="M3 4h6L5 9H3z" fill="#69a3e6" /><path d="M4 13h8" stroke="#889" /></>],
  ["Libraries", <>{s("M2 4h5l1 1h5v3H2z", "#c4b36e", 1, "#f4df85")}{s("M2 8h12v5H2z", "#76abb0", 1, "#aedcdd")}</>],
  ["Computer", <>{s("M5 2h9v8H5z", "#9aa8bb", 1, "#1b47bd")}{s("M2 5h2v8H2z", "#889", 1, "#ccd")}{s("M6 12h8", "#99a", 1.5)}</>],
  ["Network", <><circle cx="6" cy="6" r="4" fill="#2da0dd" />{s("M7 6h7v6H7z", "#9aa8bb", 1, "#163ebd")}{s("M9 14h4", "#99a")}</>],
];

const FilePane = styled.div`
  display: flex;
  flex-direction: column;
  min-width: 0;
`;

const LookRow = styled.div`
  position: relative;
  display: flex;
  align-items: center;
  height: 20px;
`;

const LookLabel = styled.label`
  display: flex;
  justify-content: flex-end;
  width: 40px;
  margin-left: -40px;
  padding-right: 5px;
  white-space: nowrap;
`;

const LookCombo = styled.div`
  display: flex;
  align-items: center;
  gap: 1px;
  width: 162px;
  height: 13px;
  padding-left: 2px;
  border: 1px solid #dde;
  background: #fff;
  select { appearance: none; flex: 1; }
`;

const LookTools = styled.div`
  display: flex;
  gap: 4px;
  margin-left: 8px;
`;

const FileList = styled.div`
  height: 184px;
  background: #fff;
`;

const ListHead = styled.div`
  height: 15px;
  padding-left: 4px;
  font: 5px/15px "Noto Sans", sans-serif;
  background: linear-gradient(#eef7fc, #d7ebf5);
`;

const FormRows = styled.div`
  padding-top: 5px;
`;

const FormRow = styled.div`
  display: grid;
  grid-template-columns: 59px 152px 20px 47px 4px minmax(0, 139px);
  align-items: center;
  height: 16px;
`;

const Combo = styled.button`
  display: flex;
  align-items: center;
  justify-content: space-between;
  height: 12px;
  padding-left: 2px;
  border: 1px solid #3c7fb1;
  background: linear-gradient(#dcf0fb, #8cc6ea);
`;

const NameInput = styled.input`
  height: 12px;
  border: 1px solid #bbb;
  background: #fff;
`;

const EmptyBox = styled.span`
  height: 12px;
  border: 1px solid #ccc;
`;

const Options = styled.ul`
  position: absolute;
  top: 174px;
  left: 353px;
  min-width: 100%;
  width: max-content;
  margin: 0;
  padding: 0 0 2px;
  border: 1px solid #444;
  background: #fff;
  list-style: none;
`;

const Option = styled.li`
  padding-left: 1px;
  line-height: 8px;
  white-space: nowrap;
  &[aria-selected="true"] { color: #fff; background: #3594ea; }
`;

const fileTypes = [
  "Rhino 3D Models (*.3dm)",
  "Rhino Worksession(*.rws)",
  "IGES (*.igs; *.iges)",
  "STEP (*.stp; *.step)",
  "VDA (*.vda)",
  "AutoCAD drawing file - (*.dwg)",
  "AutoCAD drawing exchange file - (*.dxf)",
  "MicroStation files (*.dgn)",
  "SolidWorks (*.sldprt;*.sldasm)",
  "MotionBuilder (*.fbx)",
  "PDF Files (*.pdf; *.ai, *.eps)",
  "Points File (*.asc; *.csv; *.txt; *.xyz; *.cgo_ascii; *.cgo_asci)",
  "3D Studio (*.3ds)",
  "LightWave (*.lwo)",
  "Stereolithography (*.stl)",
  "WaveFront OBJ (*.obj)",
  "Raw Triangles (*.raw)",
  "GHS Geometry (*.gf; *.gft)",
  "WAMIT (*.gdf)",
  "Recon M and PTS Files (*.m,*.pts)",
  "PLY - Polygon File Format (*.ply)",
  "SLC (*.slc)",
  "ZCorp (*.zpr)",
  "DirectX (*.x)",
  "SketchUp (*.skp)",
  "AutoCAD hatch pattern file (*.pat)",
  "VRML (*.vrml,*.wrl)",
  "All (*.3dm;*.3dx;*.rws;*.igs;*.iges;*.stp;*.step;*.vda;*.dwg;*.dxf;*.dgn;*.sldprt;*.sldasm;*.fbx;*.pdf;*.ai;*.eps;*.asc;*.csv;*.txt;*.xyz;*.cgo_ascii;*.cgo_asci;*.3ds;*.lwo;*.stl;*.obj;*.raw;*.gf;*.gft;*.GDF;*.m;*.pts)",
];

/* ---------- viewport drawing ---------- */

const gridLines = () => {
  const minor: string[] = [];
  const major: string[] = [];
  for (let i = 0; i < 110; i++) {
    const y = 120 + i * 5;
    const line = `M0 ${y + 30}L676 ${y - 190 - i}`;
    (i % 5 === 0 ? major : minor).push(line);
  }
  for (let i = 0; i < 90; i++) {
    const x = -560 + i * 14;
    const line = `M${x} 0L${x + 620 + i} 361`;
    (i % 5 === 0 ? major : minor).push(line);
  }
  return { minor: minor.join(""), major: major.join("") };
};

const noise = (n: number) => {
  const v = Math.sin(n * 127.1) * 43758.5453;
  return v - Math.floor(v);
};

const leaves = (x: number, y: number, w: number, h: number, count: number, seed: number, colors: string[]) =>
  Array.from({ length: count }, (_, i) => (
    <ellipse
      key={seed + i}
      cx={x + noise(seed + i) * w}
      cy={y + noise(seed + i * 2 + 0.5) * h}
      rx={0.8 + noise(i + 7) * 1.3}
      ry={0.6 + noise(i + 3)}
      fill={colors[i % colors.length]}
    />
  ));

const GREENS = ["#34452a", "#4d6b38", "#1f2a1a", "#5f7a4c"];
const DARKS = ["#1f211d", "#2f3a29", "#151515"];

const Viewport = () => {
  const { minor, major } = gridLines();
  return (
    <Scene viewBox="0 0 676 361" preserveAspectRatio="xMinYMax slice" role="img" aria-label="Perspective viewport">
      <rect width="676" height="361" fill="#9d9d9d" />
      <path d={minor} stroke="#979797" strokeWidth="0.600" />
      <path d={major} stroke="#8b8b8b" strokeWidth="0.700" />
      <path d="M64 255h90l-36 20-50 12z" fill="#747474" />
      <g>{leaves(54, 258, 8, 22, 40, 11, GREENS)}</g>
      <g>{leaves(58, 272, 7, 22, 45, 51, GREENS)}</g>
      <g>{leaves(68, 262, 33, 11, 80, 91, GREENS)}</g>
      <g>{leaves(115, 268, 22, 9, 16, 201, DARKS)}</g>
      <g>{leaves(130, 262, 26, 12, 40, 251, DARKS)}</g>
      <g opacity="0.700">{leaves(156, 262, 24, 11, 26, 301, GREENS)}</g>
      <path d="M22 339V321M22 339l14-4M22 339l-7-2" stroke="#686868" strokeWidth="0.900" />
      <text x="24" y="323" fontSize="7" fill="#666">z</text>
      <text x="38" y="337" fontSize="7" fill="#666">x</text>
      <text x="11" y="336" fontSize="7" fill="#666">y</text>
    </Scene>
  );
};

const ViewTabs = () => (
  <TabBar aria-label="Viewports">
    {["M3 1v6M7 1v6L4 4z", "M6 1v6L3 4z", "M3 1v6l3-3z", "M6 1v6M2 1v6l3-3z"].map((d) => (
      <TabArrow key={d} type="button" aria-label="Scroll tabs">
        <Svg $size={8} viewBox="0 0 8 8"><path d={d} fill="#333" stroke="#333" strokeWidth="0.600" /></Svg>
      </TabArrow>
    ))}
    <Slash back />
    <Tab type="button">URBANARBOLISMO</Tab>
    <Slash back />
    <Tab type="button" $active>Perspective</Tab>
    <Slash />
    <Tab type="button">Front</Tab>
    <Slash />
    <Tab type="button">Right</Tab>
    <Slash />
  </TabBar>
);

const LayersPanel = () => (
  <section>
    <PanelTitle>Layers - All Layers<Grip /><RedClose type="button" aria-label="Close layers"><Cross /></RedClose></PanelTitle>
    <LayerTools>
      {layerTools.map(([label, d]) => (
        <LayerToolButton key={label} type="button" aria-label={label}>
          <Svg $size={9} viewBox="0 0 10 10"><path d={d} stroke={label === "Delete" || label === "Back" ? "#888" : "#222"} fill={label.startsWith("Move") ? "#222" : "none"} /></Svg>
        </LayerToolButton>
      ))}
    </LayerTools>
    <ScrollPane $height={145}>
      <Clip>
        <LayerTable>
          <colgroup><Col /><Col $width={11} /><Col $width={11} /><Col $width={11} /><Col $width={11} /><Col $width={11} /><Col $width={9} /></colgroup>
          <thead><LayerHead><th>Name</th><th colSpan={5} /><th>M</th></LayerHead></thead>
          <tbody>
            {layers.map((l) => (
              <LayerRow key={l.name} $state={l.state}>
                <LayerName $depth={l.depth ?? 1}>
                  <NameLine $node={l.node}>{l.node && <Expander type="button" aria-label={`Collapse ${l.name}`} />}{l.name}</NameLine>
                </LayerName>
                <td>{l.state === "current" && <Svg $size={8} viewBox="0 0 8 8"><path d="M1 4l2 2 4-5" stroke="#111" strokeWidth="1.300" fill="none" /></Svg>}</td>
                <td>{l.bulb && <Svg $size={9} viewBox="0 0 9 9"><path d="M4.500 1a2.600 2.600 0 0 0-1.300 4.700V8h2.600V5.700A2.600 2.600 0 0 0 4.500 1z" fill={l.bulb} stroke={l.bulb === ON ? "#a8a11b" : "#2a68b8"} strokeWidth="0.800" /></Svg>}</td>
                <td>{l.bulb && <Svg $size={9} viewBox="0 0 9 9"><path d="M2 4.500h4v3.500H2zM5 4.500V2.500q1.500-2 2.500 0" fill="none" stroke={l.state === "selected" ? "#e8e0d0" : "#333"} /></Svg>}</td>
                <td><Swatch $color={l.color ?? "#050505"} /></td>
                <td>{(l.mat || l.state === "current") && <Svg $size={9} viewBox="0 0 9 9"><circle cx="4.500" cy="4.500" r="3.600" fill={l.mat ?? "#fff"} stroke={l.state ? "#eee" : "#333"} strokeWidth="0.800" /></Svg>}</td>
                <td>{l.text}</td>
              </LayerRow>
            ))}
          </tbody>
        </LayerTable>
      </Clip>
      <VScroll thumb={90} rest={39} />
    </ScrollPane>
    <HTrack><Tip d={LEFT} /><HThumb $width={80}><Ridges across /></HThumb><Tip d={RIGHT} /></HTrack>
  </section>
);

const Text = ({ label, value, dim }: { label: string; value: string; dim?: boolean }) => (
  <Field $dim={dim}>{label}<input defaultValue={value} readOnly={dim} /></Field>
);

const PropertiesSection = styled.section`
  margin-top: 6px;
`;

const PropertiesPanel = () => (
  <PropertiesSection>
    <PanelTitle>Properties<Grip /><RedClose type="button" aria-label="Close properties"><Cross /></RedClose></PanelTitle>
    <ViewportLegend>Viewport</ViewportLegend>
    <ScrollPane $height={159}>
      <Clip>
        <Properties>
          <Text label="Title" value="Perspective" />
          <Text label="Width" value="1157" dim />
          <Text label="Height" value="585" dim />
          <Field>Projection
            <Projection><select defaultValue="Perspective"><option>Perspective</option><option>Parallel</option></select><DropMark><Tip d={DROP} /></DropMark></Projection>
          </Field>
          <Section>Camera</Section>
          <Text label="Lens Length" value="50.0" />
          <Text label="X Location" value="-69.855" />
          <Text label="Y Location" value="-86.936" />
          <Text label="Z Location" value="46.574" />
          <Field as="div">Location<PushButton type="button">Place...</PushButton></Field>
          <Section>Target</Section>
          <Text label="X Target" value="1.588" />
          <Text label="Y Target" value="3.201" />
        </Properties>
      </Clip>
      <VScroll thumb={118} rest={25} />
    </ScrollPane>
  </PropertiesSection>
);

const ImportDialog = () => (
  <Dialog role="dialog" aria-label="Import">
    <DialogTitle><Rhino /><h2>Import</h2><DialogClose type="button" aria-label="Close"><Cross /></DialogClose></DialogTitle>
    <DialogBody>
      <Places aria-label="Places">
        {placeIcons.map(([name, art]) => (
          <Place key={name} type="button"><Svg $size={15} viewBox="0 0 16 16" fill="none">{art}</Svg>{name}</Place>
        ))}
      </Places>
      <FilePane>
        <LookRow>
          <LookLabel htmlFor="look">Look in:</LookLabel>
          <LookCombo>
            <Svg $size={11} viewBox="0 0 12 12"><path d="M2 1h5v10H2z" fill="#f5dc7c" /><path d="M6 2h4v8H6z" fill="#e3b93c" /></Svg>
            <select id="look" defaultValue="bin"><option>bin</option></select>
          </LookCombo>
          <LookTools>
            <Svg $size={11} viewBox="0 0 16 16"><circle cx="8" cy="8" r="6" fill="#c9ced4" stroke="#6d747c" /><path d="M11 8H5l3-3M5 8l3 3" stroke="#fff" strokeWidth="1.500" fill="none" /></Svg>
            <Svg $size={11} viewBox="0 0 16 16"><path d="M2 6h12v7H2z" fill="#f0d268" /><path d="M8 1l5 5h-3v5H6V6H3z" fill="#3c8f2f" /></Svg>
            <Svg $size={11} viewBox="0 0 16 16"><path d="M1 4h5l1 2h7v7H1z" fill="#f0cf62" /><path d="M12 1l1 3 3 1-3 1-1 3-1-3-3-1 3-1z" fill="#e06a28" /></Svg>
            <Svg $size={11} viewBox="0 0 16 16"><path d="M1.500 2.500h13v11h-13z" fill="#fff" stroke="#2450a4" strokeWidth="1.500" /><path d="M1 3h14v3H1z" fill="#2450a4" /><path d="M4 9h3M9 9h3M4 11h3M9 11h3" stroke="#5b7dc0" /></Svg>
          </LookTools>
        </LookRow>
        <FileList><ListHead>Name</ListHead></FileList>
        <HTrack><Tip d={LEFT} /><HThumb $width={120} /><Tip d={RIGHT} /></HTrack>
        <FormRows>
          <FormRow><label htmlFor="fname">File name:</label><NameInput id="fname" /></FormRow>
          <FormRow>
            <span id="ftype">Files of type:</span>
            <Combo type="button" aria-labelledby="ftype" aria-haspopup="listbox">Rhino 3D Models (*.3dm)<Tip d={DROP} /></Combo>
            <span />
            <PushButton type="button">Cancel</PushButton>
            <span />
            <EmptyBox />
          </FormRow>
        </FormRows>
      </FilePane>
    </DialogBody>
  </Dialog>
);

const menus = ["File", "Edit", "View", "Curve", "Surface", "Solid", "Mesh", "Dimension", "Transform", "Tools", "Analyze", "Render", "V-Ray", "Help"];
const snaps = ["End", "Near", "Point", "Mid", "Cen", "Int", "Perp", "Tan", "Quad", "Knot", "Project", "STrack", "Disable"];

export default function App() {
  return (
    <Frame>
      <GlobalStyle />
      <TitleBar><Rhino />URBANARBOLISMO - LOGO 3D - Rhinoceros (Corporate) - [Perspective]</TitleBar>
      <MenuBar>{menus.map((m) => <MenuItem key={m} type="button">{m}</MenuItem>)}</MenuBar>
      <CommandArea>
        <History>
          <HistoryLine>Unable to paste, no Rhino objects or text on the clipboard.</HistoryLine>
          <HistoryLine>Command: _Export</HistoryLine>
          <HistoryLine>Meshing... Press Esc to cancel</HistoryLine>
          <HistoryLine><PathStart>File successfully written as C:\</PathStart>\IVY GENERATOR\bin\ICONO 3D 2.obj</HistoryLine>
          <HistoryLine>Command: _Import</HistoryLine>
        </History>
        <Prompt>Command: <PromptInput />
          <Svg $size={8} viewBox="0 0 8 8" aria-hidden="true"><path d="M2 3l2-2 2 2zM2 5h4L4 7z" fill="#777" /></Svg>
        </Prompt>
      </CommandArea>

      <ToolbarStack>
        {toolbarRows.map((row, r) => (
          <ToolbarRow key={r} role="toolbar">
            {row.map(([span, names], g) => (
              <ToolGroup key={g} $span={span}>
                {names.split(" ").map((n, i) => (
                  <ToolButton key={i} type="button" aria-label={n}><Icon name={n} /></ToolButton>
                ))}
              </ToolGroup>
            ))}
          </ToolbarRow>
        ))}
        <PluginRow>
          <PluginBar>
            <PluginButton type="button"><Icon name="earth" />Project Info</PluginButton>
            <PluginButton type="button"><Icon name="nodes" />Nodes</PluginButton>
            <PluginButton type="button"><Icon name="rgb" />Materials</PluginButton>
            <PluginButton type="button"><Metric />Metrics</PluginButton>
          </PluginBar>
        </PluginRow>
      </ToolbarStack>

      <WorkArea>
        <Palette>
          {paletteTools.split(" ").map((n) => (
            <ToolButton key={n} type="button" aria-label={n}><Icon name={n} /></ToolButton>
          ))}
        </Palette>
        <Panels>
          <LayersPanel />
          <PropertiesPanel />
        </Panels>
        <ViewColumn>
          <Viewport />
          <ViewTabs />
        </ViewColumn>
      </WorkArea>

      <SnapStrip>
        <SnapBar aria-label="Object snaps">
          {snaps.map((n, i) => <Snap key={n}><Check defaultChecked={i < 7} />{n}</Snap>)}
        </SnapBar>
      </SnapStrip>
      <StatusBar>
        <StatusCell>CPlane</StatusCell>
        <StatusCell>x</StatusCell>
        <StatusCell>y</StatusCell>
        <StatusCell>z</StatusCell>
        <StatusCell>Distance</StatusCell>
        <StatusCell><Swatch $color="#050505" />IVY</StatusCell>
        <StatusCell>Snap</StatusCell>
        <StatusCell>Ortho</StatusCell>
        <StatusCell>Planar</StatusCell>
        <StatusCell $strong>Osnap</StatusCell>
        <StatusCell>Record History</StatusCell>
      </StatusBar>

      <TextureWindow>
        <TextureTitle>Texture mapping</TextureTitle>
        <TextureTools>
          {["texred", "texpale", "tex", "tex", "texball", "texball", "tex", "texred"].map((n, i) => <Icon key={i} name={n} />)}
        </TextureTools>
      </TextureWindow>
      <ImportDialog />
      <Options role="listbox" aria-label="Files of type">
        {fileTypes.map((t) => (
          <Option key={t} role="option" aria-selected={t.startsWith("WaveFront")}>{t}</Option>
        ))}
      </Options>
    </Frame>
  );
}
